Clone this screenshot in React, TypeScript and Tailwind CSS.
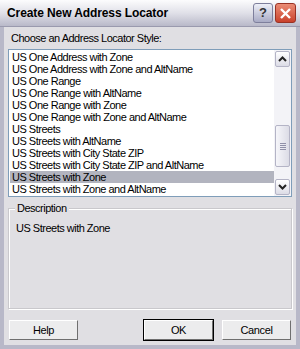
import React from "react";

const items = [
  "US One Address with Zone",
  "US One Address with Zone and AltName",
  "US One Range",
  "US One Range with AltName",
  "US One Range with Zone",
  "US One Range with Zone and AltName",
  "US Streets",
  "US Streets with AltName",
  "US Streets with City State ZIP",
  "US Streets with City State ZIP and AltName",
  "US Streets with Zone",
  "US Streets with Zone and AltName",
];

const font = { fontFamily: "'Liberation Sans', Arial, sans-serif" };

function Chevron({ up }: { up?: boolean }) {
  return (
    <svg width="9" height="6" viewBox="0 0 9 6">
      <path
        d={up ? "M1 5 L4.5 1.5 L8 5" : "M1 1 L4.5 4.5 L8 1"}
        fill="none"
        stroke="#222"
        strokeWidth="2"
      />
    </svg>
  );
}

function ScrollBtn({ up }: { up?: boolean }) {
  return (
    <div className="h-[16px] w-[15px] mx-auto rounded-[2px] border border-[#b4b4c6] bg-gradient-to-b from-[#ffffff] to-[#dcdce6] flex items-center justify-center">
      <Chevron up={up} />
    </div>
  );
}

function Btn({ label, def }: { label: string; def?: boolean }) {
  return (
    <div
      className={`w-[71px] h-[22px] ${def ? "border border-black" : "border border-transparent"}`}
    >
      <div className="h-full w-full border-t border-l border-t-white border-l-white border-b border-r border-b-[#6f6f6f] border-r-[#6f6f6f] bg-[#ececed] flex items-center justify-center text-[11px] tracking-[-0.4px] text-black">
        {label}
      </div>
    </div>
  );
}

export default function App() {
  return (
    <div
      className="w-[300px] h-[349px] bg-[#b8b8c8] flex flex-col overflow-hidden"
      style={font}
    >
      {/* title bar */}
      <div className="h-[27px] shrink-0 bg-gradient-to-b from-[#fcfcfd] via-[#e0e0e8] to-[#b9b9c9] border-b border-[#9a9aae] flex items-center pl-[7px] pr-[4px]">
        <div className="flex-1 text-[12px] font-bold text-black tracking-[-0.1px]">
          Create New Address Locator
        </div>
        <div className="flex gap-[2px] items-center">
          <div className="w-[20px] h-[20px] rounded-[3px] border border-[#7e7f9c] bg-gradient-to-b from-[#eef0f8] to-[#a9abc5] flex items-center justify-center text-[13px] font-bold text-[#333]">
            ?
          </div>
          <div className="w-[21px] h-[20px] rounded-[3px] border border-[#983224] bg-gradient-to-b from-[#ea8b74] to-[#c9402b] flex items-center justify-center">
            <svg width="13" height="13" viewBox="0 0 13 13">
              <path d="M2 2 L11 11 M11 2 L2 11" stroke="#fff" strokeWidth="2.4" />
            </svg>
          </div>
        </div>
      </div>

      {/* body */}
      <div className="flex-1 mx-[4px] mb-[4px] bg-[#e0dfe3] flex flex-col px-[4px] tracking-[-0.5px]">
        <div className="h-[22px] flex items-center pl-[3px] pt-[1px] text-[11px] text-black">
          Choose an Address Locator Style:
        </div>
        <div className="h-[148px] border border-[#7f9db9] bg-white flex">
          <div className="flex-1 pl-[3px] pt-[1px]">
            {items.map((t) => (
              <div
                key={t}
                className={`h-[12px] leading-[12px] text-[11px] text-black whitespace-nowrap ${
                  t === "US Streets with Zone" ? "bg-[#b2b4bf] -ml-[2px] pl-[2px]" : ""
                }`}
              >
                {t}
              </div>
            ))}
          </div>
          <div className="w-[17px] bg-[#f3f3f7] flex flex-col py-[1px]">
            <ScrollBtn up />
            <div className="h-[58px]" />
            <div className="h-[42px] w-[15px] mx-auto rounded-[2px] border border-[#b4b4c6] bg-gradient-to-r from-[#f6f6fa] to-[#dcdce6] flex items-center justify-center">
              <div className="flex flex-col gap-[1px]">
                <div className="w-[6px] h-[1px] bg-[#9090a8]" />
                <div className="w-[6px] h-[1px] bg-[#9090a8]" />
                <div className="w-[6px] h-[1px] bg-[#9090a8]" />
                <div className="w-[6px] h-[1px] bg-[#9090a8]" />
              </div>
            </div>
            <div className="flex-1" />
            <ScrollBtn />
          </div>
        </div>

        {/* description group */}
        <div className="mt-[11px] h-[101px] border border-[#c9c8cc] shadow-[inset_1px_1px_0_#ffffff,1px_1px_0_#ffffff] relative px-[7px]">
          <div className="absolute -top-[7px] left-[6px] bg-[#e0dfe3] px-[2px] text-[11px] leading-[12px] text-black">
            Description
          </div>
          <div className="pt-[11px] text-[11px] text-black">US Streets with Zone</div>
        </div>

        {/* buttons */}
        <div className="mt-[10px] flex items-center">
          <Btn label="Help" />
          <div className="flex-1" />
          <Btn label="OK" def />
          <div className="w-[7px]" />
          <Btn label="Cancel" />
        </div>
      </div>
    </div>
  );
}
